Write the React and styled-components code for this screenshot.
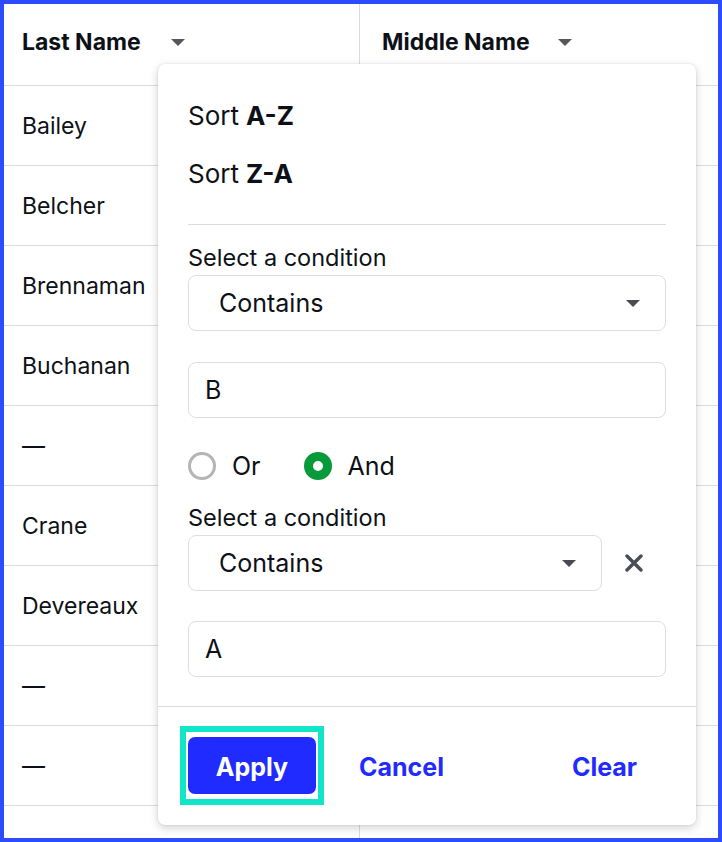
import React from "react";
import styled, { createGlobalStyle } from "styled-components";

const GlobalStyle = createGlobalStyle`
    html, body, #root {
        margin: 0;
        height: 100%;
        overflow: hidden;
        background: #fff;
    }

    * {
        box-sizing: border-box;
    }

    body {
        font-family: Inter, "Noto Sans", "Liberation Sans", sans-serif;
        color: #0d1117;
    }
`;

const Frame = styled.div`
    position: relative;
    height: 100%;

    &::after {
        content: "";
        position: absolute;
        inset: 0;
        border: 4px solid #2d4bff;
        pointer-events: none;
        z-index: 5;
    }
`;

const Table = styled.div`
    display: grid;
    grid-template-columns: 360px 1fr;
`;

const HeadCell = styled.div`
    height: 86px;
    display: flex;
    align-items: center;
    padding-left: 22px;
    font-size: 23px;
    font-weight: 700;
    border-bottom: 1px solid #dcdcdc;
    border-right: ${(p) => (p.$last ? "none" : "1px solid #dcdcdc")};
    padding-bottom: 2px;
`;

const Cell = styled.div`
    height: 80px;
    display: flex;
    align-items: center;
    padding-left: 22px;
    font-size: 23px;
    border-bottom: 1px solid #dcdcdc;
    border-right: ${(p) => (p.$last ? "none" : "1px solid #dcdcdc")};
`;

const Caret = ({ size = 14, color = "#55565c" }) => (
    <svg width={size} height={size / 2} viewBox="0 0 14 7">
        <path d="M0 0h14L7 7z" fill={color} />
    </svg>
);

const HeadCaret = styled.span`
    display: inline-flex;
    margin-left: ${(p) => p.$gap}px;
    margin-top: 1px;
`;

const Popup = styled.div`
    position: absolute;
    left: 158px;
    top: 64px;
    width: 538px;
    background: #fff;
    border-radius: 7px;
    box-shadow: 0 3px 10px rgba(0, 0, 0, 0.18), 0 0 2px rgba(0, 0, 0, 0.12);
    z-index: 3;
`;

const Body = styled.div`
    padding: 22px 30px 29px;
    display: flex;
    flex-direction: column;
`;

const SortItem = styled.div`
    height: 58px;
    display: flex;
    align-items: center;
    font-size: 26px;
    gap: 7px;

    b {
        font-weight: 700;
    }
`;

const Rule = styled.div`
    height: 1px;
    background: #dcdcdc;
    margin-top: 22px;
`;

const Label = styled.div`
    height: 28px;
    display: flex;
    align-items: center;
    font-size: 23.5px;
    margin-top: ${(p) => p.$top}px;
`;

const SelectRow = styled.div`
    display: flex;
    align-items: center;
    margin-top: 4px;
`;

const Select = styled.div`
    flex: 1;
    height: 56px;
    border: 1px solid #dedede;
    border-radius: 8px;
    display: flex;
    align-items: center;
    justify-content: space-between;
    padding: 0 25px 0 30px;
    font-size: 25px;
`;

const ClearX = styled.button`
    width: 64px;
    height: 56px;
    border: none;
    background: none;
    padding: 0;
    display: flex;
    align-items: center;
    justify-content: center;
`;

const Input = styled.div`
    height: 56px;
    border: 1px solid #dedede;
    border-radius: 8px;
    display: flex;
    align-items: center;
    padding-left: 16px;
    font-size: 25px;
    margin-top: ${(p) => p.$top}px;
`;

const RadioRow = styled.div`
    height: 28px;
    display: flex;
    align-items: center;
    margin-top: 34px;
    gap: 16px;
    font-size: 25px;
`;

const Radio = styled.span`
    width: 28px;
    height: 28px;
    border-radius: 50%;
    border: ${(p) => (p.$on ? "9px solid #069a3a" : "3px solid #b5b5b5")};
    background: #fff;
    margin-left: ${(p) => p.$gap || 0}px;
`;

const Footer = styled.div`
    border-top: 1px solid #dcdcdc;
    padding: 19px 30px 20px 22px;
    display: flex;
    align-items: center;
`;

const FocusRing = styled.div`
    border: 6px solid #12e6c9;
    padding: 5px 2px;
`;

const ApplyButton = styled.button`
    width: 128px;
    height: 57px;
    border: none;
    border-radius: 7px;
    background: #1f2bff;
    color: #fff;
    font-family: inherit;
    font-size: 25px;
    font-weight: 700;
    padding: 2px 0 0;
`;

const TextButton = styled.button`
    border: none;
    background: none;
    font-family: inherit;
    font-size: 25px;
    font-weight: 700;
    color: #1f2bff;
    padding: 2px 29px 0;
    margin-left: ${(p) => (p.$push ? "auto" : "6px")};
`;

const rows = ["Bailey", "Belcher", "Brennaman", "Buchanan", "—", "Crane", "Devereaux", "—", "—", ""];

export default function App() {
    return (
        <>
            <GlobalStyle />
            <Frame>
                <Table>
                    <HeadCell>
                        Last Name
                        <HeadCaret $gap={30}>
                            <Caret />
                        </HeadCaret>
                    </HeadCell>
                    <HeadCell $last>
                        Middle Name
                        <HeadCaret $gap={28}>
                            <Caret />
                        </HeadCaret>
                    </HeadCell>
                    {rows.map((r, i) => (
                        <React.Fragment key={i}>
                            <Cell>{r}</Cell>
                            <Cell $last />
                        </React.Fragment>
                    ))}
                </Table>

                <Popup>
                    <Body>
                        <SortItem>
                            Sort <b>A-Z</b>
                        </SortItem>
                        <SortItem>
                            Sort <b>Z-A</b>
                        </SortItem>
                        <Rule />
                        <Label $top={18}>Select a condition</Label>
                        <SelectRow>
                            <Select>
                                Contains
                                <Caret color="#4a4b52" />
                            </Select>
                        </SelectRow>
                        <Input $top={31}>B</Input>
                        <RadioRow>
                            <Radio />
                            <span>Or</span>
                            <Radio $on $gap={27} />
                            <span>And</span>
                        </RadioRow>
                        <Label $top={23}>Select a condition</Label>
                        <SelectRow>
                            <Select>
                                Contains
                                <Caret color="#4a4b52" />
                            </Select>
                            <ClearX aria-label="remove">
                                <svg width="18" height="18" viewBox="0 0 18 18">
                                    <path
                                        d="M2 2L16 16M16 2L2 16"
                                        stroke="#4a4d55"
                                        strokeWidth="3.4"
                                        strokeLinecap="round"
                                    />
                                </svg>
                            </ClearX>
                        </SelectRow>
                        <Input $top={30}>A</Input>
                    </Body>
                    <Footer>
                        <FocusRing>
                            <ApplyButton>Apply</ApplyButton>
                        </FocusRing>
                        <TextButton>Cancel</TextButton>
                        <TextButton $push>Clear</TextButton>
                    </Footer>
                </Popup>
            </Frame>
        </>
    );
}
